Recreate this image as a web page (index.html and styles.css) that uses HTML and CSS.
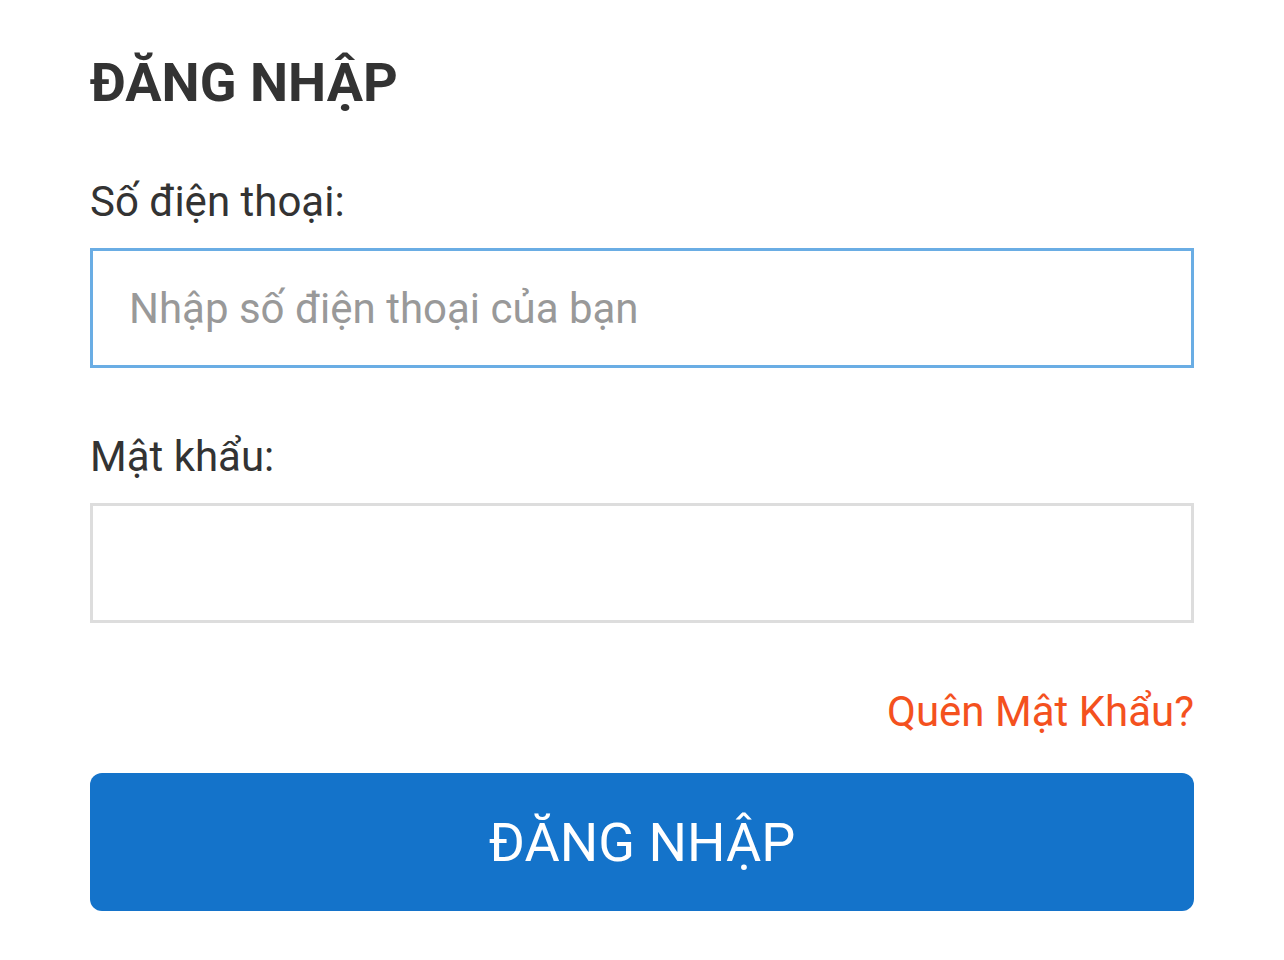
FILE: index.html
```html
<!DOCTYPE html>
<html lang="vi">
<head>
<meta charset="utf-8">
<link rel="stylesheet" href="styles.css">
</head>
<body>
<main class="login">
  <h1 class="title">ĐĂNG NHẬP</h1>
  <label class="label" for="phone">Số điện thoại:</label>
  <input class="field field-focus" id="phone" type="text" placeholder="Nhập số điện thoại của bạn">
  <label class="label label-pass" for="pass">Mật khẩu:</label>
  <input class="field" id="pass" type="password">
  <div class="forgot-row"><a class="forgot" href="#">Quên Mật Khẩu?</a></div>
  <button class="submit" type="button">ĐĂNG NHẬP</button>
</main>
</body>
</html>
```

FILE: styles.css
```css
* { box-sizing: border-box; }
html, body { margin: 0; padding: 0; background: #fff; }
body { font-family: Roboto, "Noto Sans", sans-serif; color: #333; }
.login {
  display: flex;
  flex-direction: column;
  padding: 51px 90px 0 90px;
}
.title {
  margin: 0;
  font-size: 54px;
  font-weight: 700;
  line-height: 64px;
  color: #333;
}
.label {
  margin-top: 63px;
  font-size: 42px;
  line-height: 48px;
  color: #333;
}
.label-pass { margin-top: 65px; }
.field {
  margin-top: 22px;
  height: 120px;
  width: 100%;
  border: 3px solid #dddddd;
  padding: 0 36px;
  font-family: Roboto, "Noto Sans", sans-serif;
  font-size: 42px;
  color: #333;
  outline: none;
  background: #fff;
}
.field-focus { border-color: #6aade4; }
.field::placeholder { color: #999; }
.forgot-row {
  display: flex;
  justify-content: flex-end;
  margin-top: 65px;
}
.forgot {
  font-size: 42px;
  line-height: 48px;
  color: #f4511e;
  text-decoration: none;
}
.submit {
  margin-top: 37px;
  height: 138px;
  width: 100%;
  border: none;
  border-radius: 12px;
  background: #1473ca;
  color: #fff;
  font-family: Roboto, "Noto Sans", sans-serif;
  font-size: 54px;
  font-weight: 400;
}
```
